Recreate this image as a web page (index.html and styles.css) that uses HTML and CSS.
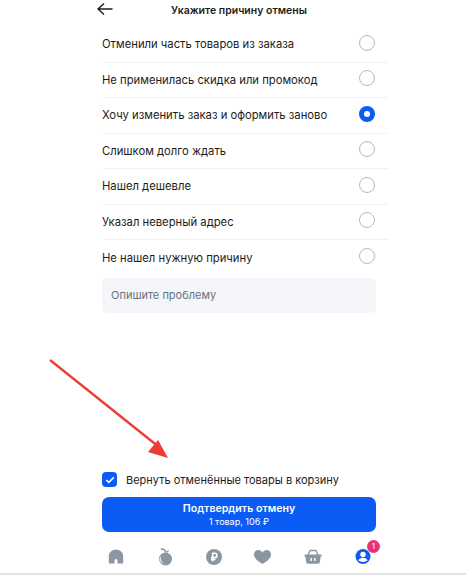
FILE: index.html
```html
<!DOCTYPE html>
<html lang="ru">
<head>
  <meta charset="UTF-8">
  <title>Укажите причину отмены</title>
  <link rel="stylesheet" href="styles.css">
</head>
<body>
  <div class="screen">
    <div class="header">
      <svg class="back" width="20" height="14" viewBox="0 0 20 14"><path d="M16.500 7H2M8 1.500 2 7l6 5.500" fill="none" stroke="#1c1c1c" stroke-width="1.400"/></svg>
      <h2>Укажите причину отмены</h2>
    </div>

    <div class="reasons">
      <div class="reason"><span>Отменили часть товаров из заказа</span><i class="radio"></i></div>
      <div class="reason"><span>Не применилась скидка или промокод</span><i class="radio"></i></div>
      <div class="reason"><span>Хочу изменить заказ и оформить заново</span><i class="radio checked"></i></div>
      <div class="reason"><span>Слишком долго ждать</span><i class="radio"></i></div>
      <div class="reason"><span>Нашел дешевле</span><i class="radio"></i></div>
      <div class="reason"><span>Указал неверный адрес</span><i class="radio"></i></div>
      <div class="reason last"><span>Не нашел нужную причину</span><i class="radio"></i></div>
    </div>

    <div class="problem">Опишите проблему</div>

    <div class="bottom">
      <div class="return">
        <span class="checkbox">
          <svg width="10" height="8" viewBox="0 0 10 8"><path d="M1.200 4 3.800 6.400 8.800 1.400" fill="none" stroke="#fff" stroke-width="1.500"/></svg>
        </span>
        <span>Вернуть отменённые товары в корзину</span>
      </div>
      <button class="confirm">
        <b>Подтвердить отмену</b>
        <small>1 товар, 106 ₽</small>
      </button>
      <div class="tabs">
        <svg width="16" height="15" viewBox="0 0 16 15"><path d="M8 .5C4 .5 .8 3.500 .8 7.500v5.700c0 .7.500 1.300 1.200 1.300h4.500v-3a1.500 1.500 0 0 1 3 0v3H14c.7 0 1.200-.6 1.200-1.300V7.500C15.200 3.500 12 .5 8 .5z" fill="#8c96a3"/></svg>
        <svg width="16" height="18" viewBox="0 0 16 18"><circle cx="8.500" cy="11" r="6.500" fill="#8c96a3"/><path d="M4.200 8.500c-1 3 .5 6 3.500 7-2.800.2-5-1.800-5.200-4.200 0-1.200.6-2.200 1.700-2.800z" fill="#e6e9ed"/><path d="M3.800 1C6.500 .8 8.200 2 8.800 4.500" fill="none" stroke="#8c96a3" stroke-width="1.600"/><path d="M9 4.500c.4-1.500 1.500-2.300 3-2.300-.2 1.500-1.400 2.400-3 2.300z" fill="#8c96a3"/></svg>
        <svg width="16" height="16" viewBox="0 0 16 16"><circle cx="8" cy="8" r="8" fill="#8c96a3"/><path d="M6.700 12.500V4.200h2a2.200 2.200 0 0 1 0 4.400H5M5 10.500h4.500" fill="none" stroke="#fff" stroke-width="1.600"/></svg>
        <svg width="17" height="14" viewBox="0 0 17 14"><path d="M8.500 14C3 10.500 0 8 0 4.500 0 1.800 2 0 4.300 0c1.800 0 3.300.9 4.200 2.400C9.400.9 10.900 0 12.700 0 15 0 17 1.800 17 4.500 17 8 14 10.500 8.500 14z" fill="#8c96a3"/></svg>
        <svg width="18" height="15" viewBox="0 0 18 15"><path d="M.5 5.500h17v2h-.8l-1 6a1.500 1.500 0 0 1-1.500 1.300H3.800a1.500 1.500 0 0 1-1.500-1.300l-1-6H.5z" fill="#8c96a3"/><path d="M4 6 6 1.500h6L14 6" fill="none" stroke="#8c96a3" stroke-width="1.400"/><path d="M7.200 9v3M10.800 9v3" stroke="#fff" stroke-width="1.500"/></svg>
        <span class="profile">
          <svg width="16" height="15" viewBox="0 0 16 16"><circle cx="8" cy="8" r="8" fill="#0a5cf5"/><circle cx="8" cy="5.800" r="2.900" fill="#fff"/><path d="M3.200 12.300c.5-2 2.500-3 4.800-3s4.300 1 4.800 3c-1.200 1-2.900 1.500-4.800 1.500s-3.600-.5-4.800-1.500z" fill="#fff"/></svg>
          <em class="badge">1</em>
        </span>
      </div>
    </div>

    <!-- стрелка поверх скриншота -->
    <svg class="arrow" width="125" height="105" viewBox="0 0 125 105"><path d="M1 1 110 88" stroke="#ef3b35" stroke-width="2.300" fill="none"/><path d="M119 99 99 93 109 81z" fill="#ef3b35"/></svg>
  </div>
</body>
</html>
```

FILE: styles.css
```css
* {
  box-sizing: border-box;
}
body {
  margin: 0;
  background-color: #fff;
  font-family: 'Inter', sans-serif;
  color: #1c1c1c;
}
.screen {
  position: relative;
  height: 575px;
  padding-left: 102px;
  padding-right: 90px;
  display: flex;
  flex-direction: column;
  border-bottom: 2px solid #e2e2e2;
}
.header {
  height: 27px;
  display: flex;
  align-items: center;
  justify-content: center;
  position: relative;
}
.header h2 {
  margin: 0;
  font-size: 10.5px;
  font-weight: 600;
  margin-top: -6px;
}
.back {
  position: absolute;
  left: -6px;
  top: 2px;
}
.reasons {
  margin-right: -12px;
}
.reason {
  height: 35.5px;
  display: flex;
  align-items: center;
  justify-content: space-between;
  padding-right: 13px;
  font-size: 11.25px;
  border-bottom: 1px solid #f1f2f4;
}
.reason.last {
  border-bottom: none;
}
.radio {
  width: 16px;
  height: 16px;
  margin-top: -3px;
  border-radius: 50%;
  border: 1.5px solid #b2bac4;
}
.radio.checked {
  border: 5px solid #0a5cf5;
}
.problem {
  height: 35px;
  margin-top: 2px;
  padding-left: 9px;
  display: flex;
  align-items: center;
  background-color: #f4f6fa;
  border-radius: 5px;
  font-size: 11px;
  color: #68727f;
}
.bottom {
  margin-top: auto;
}
.return {
  display: flex;
  align-items: center;
  gap: 9px;
  font-size: 11px;
  margin-bottom: 10px;
}
.checkbox {
  width: 15px;
  height: 15px;
  border-radius: 4px;
  background-color: #0a5cf5;
  display: flex;
  align-items: center;
  justify-content: center;
}
.confirm {
  width: 100%;
  height: 35px;
  display: flex;
  flex-direction: column;
  align-items: center;
  justify-content: center;
  padding: 0;
  border: none;
  border-radius: 7px;
  background-color: #0a5cf5;
  color: #fff;
  font-family: inherit;
}
.confirm b {
  font-size: 10.6px;
  font-weight: 600;
  line-height: 15px;
}
.confirm small {
  font-size: 9px;
  line-height: 12px;
}
.tabs {
  height: 41px;
  display: flex;
  align-items: center;
  justify-content: space-between;
  padding: 8px 5px 0 6px;
}
.profile {
  position: relative;
  display: flex;
}
.badge {
  position: absolute;
  top: -9px;
  right: -9px;
  width: 13px;
  height: 13px;
  border-radius: 50%;
  background-color: #e8327c;
  color: #fff;
  font-size: 8px;
  font-style: normal;
  line-height: 13px;
  text-align: center;
}
.arrow {
  position: absolute;
  left: 49px;
  top: 359px;
}
```
